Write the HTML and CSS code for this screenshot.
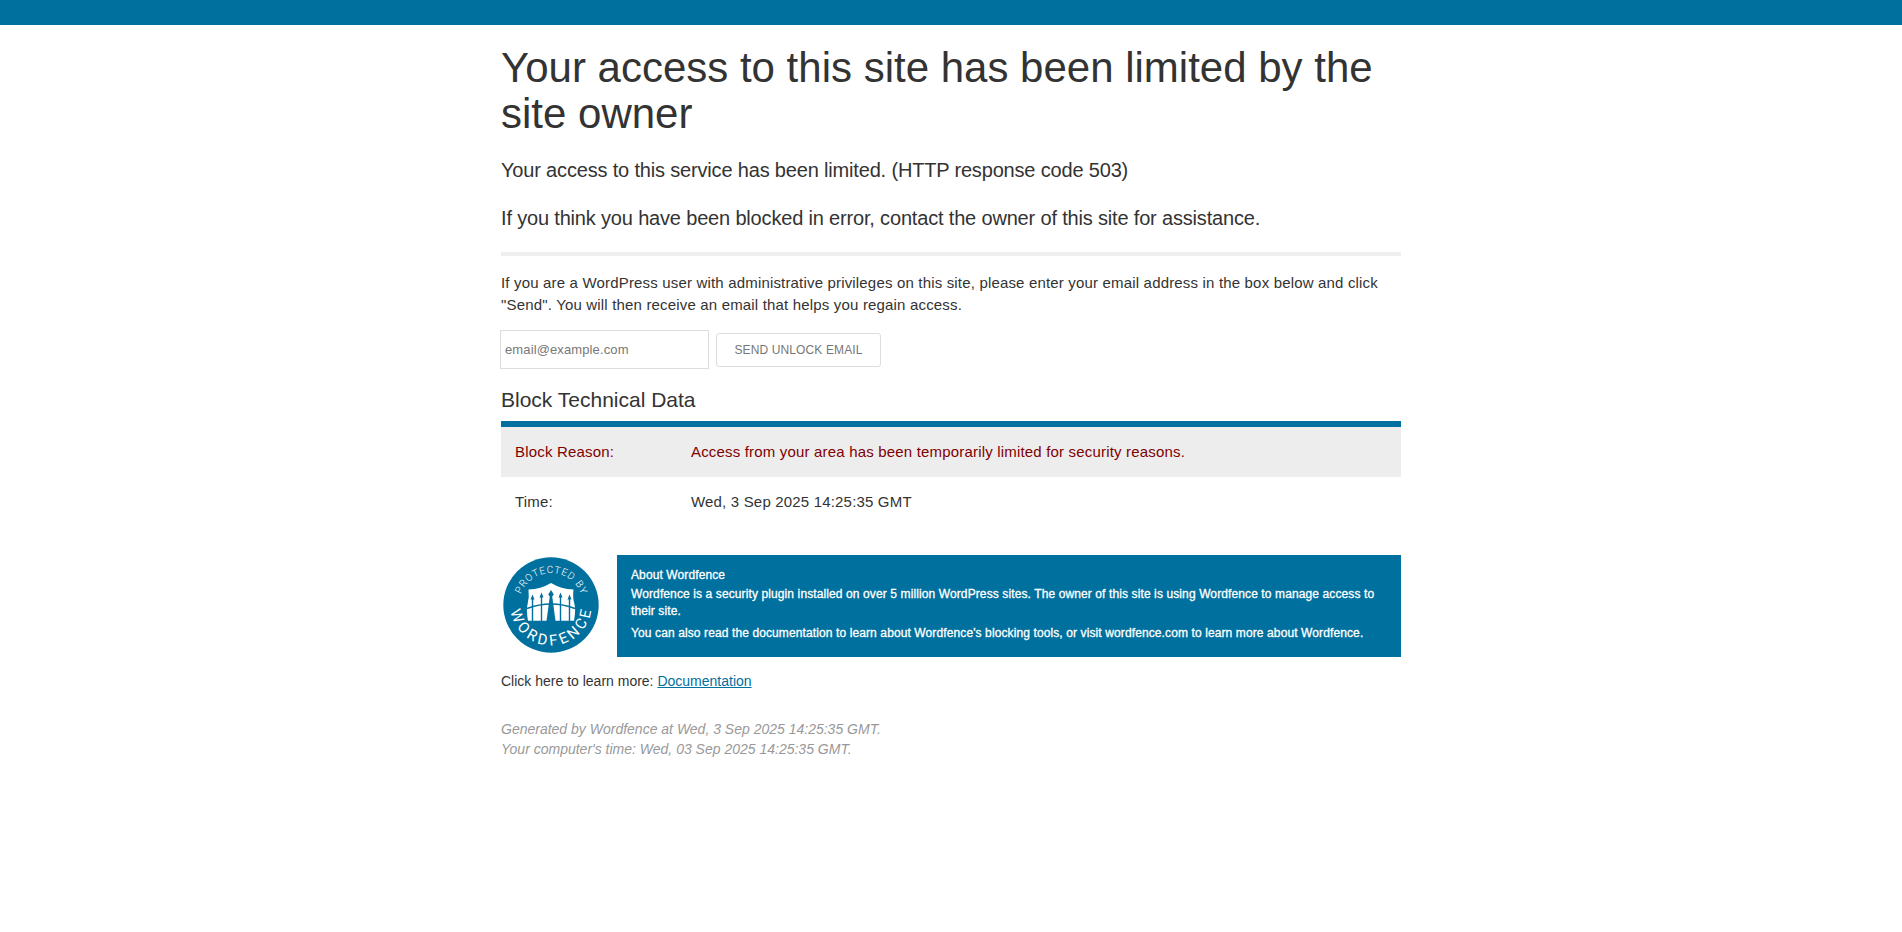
FILE: index.html
```html
<!DOCTYPE html>
<html lang="en">
<head>
<meta charset="utf-8">
<title>Your access to this site has been limited by the site owner</title>
<link rel="stylesheet" href="styles.css">
</head>
<body>
<header class="topbar"></header>
<main class="wrap">
  <h1 class="title">Your access to this site has been limited by the site owner</h1>
  <p class="lead lead-first">Your access to this service has been limited. (HTTP response code 503)</p>
  <p class="lead">If you think you have been blocked in error, contact the owner of this site for assistance.</p>
  <hr class="rule">
  <p class="info">If you are a WordPress user with administrative privileges on this site, please enter your email address in the box below and click "Send". You will then receive an email that helps you regain access.</p>
  <form class="unlock">
    <input class="email" type="email" placeholder="email@example.com">
    <button class="send" type="button">Send Unlock Email</button>
  </form>
  <h2 class="subtitle">Block Technical Data</h2>
  <dl class="data">
    <div class="row reason"><dt>Block Reason:</dt><dd>Access from your area has been temporarily limited for security reasons.</dd></div>
    <div class="row"><dt>Time:</dt><dd>Wed, 3 Sep 2025 14:25:35 GMT</dd></div>
  </dl>
  <section class="about">
    <svg class="badge" viewBox="0 0 100 100" role="img" aria-label="Protected by Wordfence">
      <defs>
        <path id="arc-top" d="M18 50A32 32 0 0 1 82 50"/>
        <path id="arc-bottom" d="M9.500 47A40.600 40.600 0 1 0 90.500 47"/>
      </defs>
      <circle class="disc" cx="50" cy="50" r="47.700"/>
      <text class="arc-small"><textPath href="#arc-top" startOffset="50.500%" text-anchor="middle">PROTECTED BY</textPath></text>
      <text class="arc-large"><textPath href="#arc-bottom" startOffset="51.500%" text-anchor="middle">WORDFENCE</textPath></text>
      <path class="shield" d="M50 28q10 6 22.500 6.500q-1 8 .8 14t-.3 17.200H27q-2-10.700-.3-17.200t.8-14Q40 34 50 28z"/>
      <g class="fence">
        <path class="rail" d="M26 53.500Q50 44.500 74 53.500"/>
        <path class="pickets" d="M31.500 43v23M40.500 41v25M59.500 41v25M68.500 43v23"/>
        <path class="post" d="M49 40h2l3.500 26h-9z"/>
        <path class="tips" d="M31.500 39.500l2 5h-4zM40.500 37.500l2 5h-4zM50 35l2.800 4.500L50 43l-2.800-3.500zM59.500 37.500l2 5h-4zM68.500 39.500l2 5h-4z"/>
      </g>
    </svg>
    <div class="about-text">
      <p class="about-head">About Wordfence</p>
      <p class="about-p">Wordfence is a security plugin installed on over 5 million WordPress sites. The owner of this site is using Wordfence to manage access to their site.</p>
      <p class="about-p">You can also read the documentation to learn about Wordfence's blocking tools, or visit wordfence.com to learn more about Wordfence.</p>
    </div>
  </section>
  <p class="learn">Click here to learn more: <a href="#">Documentation</a></p>
  <p class="meta"><em>Generated by Wordfence at Wed, 3 Sep 2025 14:25:35 GMT.<br>Your computer's time: Wed, 03 Sep 2025 14:25:35 GMT.</em></p>
</main>
</body>
</html>
```
FILE: styles.css
```css
* { box-sizing: border-box; }
body { margin: 0; background: #fff; color: #333; font: 15px/22px "Liberation Sans", Arial, sans-serif; }
.topbar { height: 25px; background: #00709e; }
.wrap { width: 900px; margin: 0 auto; }
p, h1, h2, dl, dd { margin: 0; font-weight: 400; }
.title { padding-top: 20px; font-size: 42px; line-height: 46px; }
.lead { margin-top: 20px; font-size: 20px; line-height: 28px; letter-spacing: -.173px; }
.lead-first { margin-top: 19px; }
.rule { height: 4px; margin: 20px 0 16px; border: 0; background: #eee; }
.info { font-size: 15px; line-height: 22px; letter-spacing: .173px; }
.unlock { display: flex; align-items: center; margin: 14px 0 0 -1px; gap: 7px; }
.email { width: 209px; height: 39px; padding: 0 4px; border: 1px solid #ddd; font: 13px "Liberation Sans", Arial, sans-serif; letter-spacing: .12px; color: #777; }
.email::placeholder { color: #777; opacity: 1; }
.send { width: 165px; height: 34px; padding: 0; border: 1px solid #ddd; border-radius: 3px; background: #fff; color: #777; font: 12px "Liberation Sans", Arial, sans-serif; letter-spacing: .12px; text-transform: uppercase; }
.subtitle { margin-top: 17px; font-size: 21px; line-height: 28px; }
.data { margin-top: 7px; border-top: 6px solid #00709e; letter-spacing: .18px; }
.row { display: grid; grid-template-columns: 176px 1fr; padding: 14px; }
.reason { background: #ededed; color: #800000; }
.about { display: flex; justify-content: space-between; margin-top: 28px; height: 102px; }
.badge { width: 100px; height: 100px; }
.disc { fill: #00709e; }
.arc-small, .arc-large { fill: #fff; font-family: Roboto, sans-serif; }
.arc-small { font-size: 10px; letter-spacing: .8px; font-weight: 300; }
.arc-large { font-size: 15px; letter-spacing: 3.3px; }
.shield { fill: #fff; }
.rail, .pickets { fill: none; stroke: #00709e; stroke-width: 1.4; }
.post, .tips { fill: #00709e; }
.about-text { width: 784px; padding: 12px 14px; background: #00709e; color: #fff; font-size: 12px; line-height: 17px; letter-spacing: .11px; -webkit-text-stroke: .3px #fff; }
.about-head { margin-bottom: 2px; }
.about-p { margin-bottom: 5px; }
.learn { margin-top: 14px; font-size: 14px; line-height: 20px; }
.learn a { color: #00709e; }
.meta { margin-top: 28px; color: #999; font-size: 14px; line-height: 20px; }
```
